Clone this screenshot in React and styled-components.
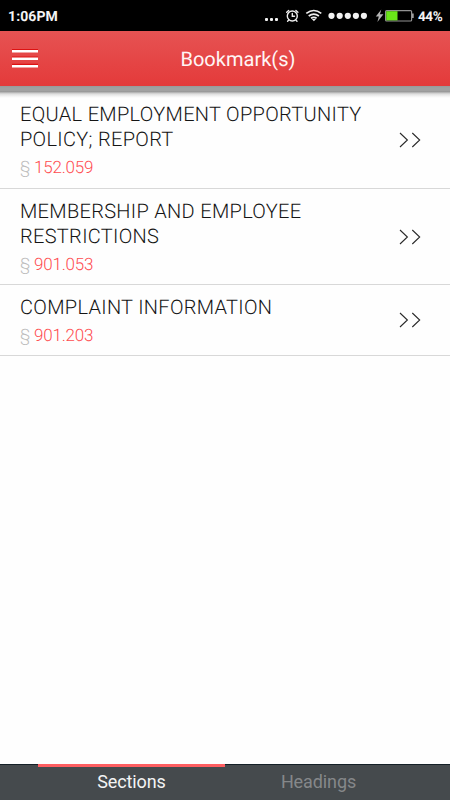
import React from "react";
import styled, { createGlobalStyle } from "styled-components";

const GlobalStyle = createGlobalStyle`
  * { box-sizing: border-box; }
  body { margin: 0; background: #fff; font-family: Roboto, "Liberation Sans", sans-serif; text-rendering: geometricPrecision; }
`;

const Screen = styled.div`
  display: flex;
  flex-direction: column;
  width: 450px;
  height: 800px;
  overflow: hidden;
  background: #fefefe;
`;

const StatusBar = styled.div`
  display: flex;
  justify-content: space-between;
  flex: none;
  height: 31px;
  padding-left: 8px;
  background: #000;
`;

const Clock = styled.span`
  color: #f4f4f4;
  font-size: 14px;
  font-weight: 700;
  line-height: 34px;
  letter-spacing: 0.1px;
`;

const StatusRight = styled.div`
  display: flex;
  padding-right: 7px;
`;

const Percent = styled.span`
  width: 25px;
  color: #f4f4f4;
  font-size: 13.5px;
  font-weight: 700;
  line-height: 34px;
  letter-spacing: -0.4px;
  white-space: nowrap;
`;

const Header = styled.header`
  display: grid;
  grid-template-columns: 26px 1fr;
  align-items: center;
  flex: none;
  height: 55px;
  padding: 0 12px;
  background: linear-gradient(#e65353, #e43a3a);
`;

const MenuButton = styled.button`
  display: flex;
  width: 26px;
  padding: 0 0 1px;
  border: 0;
  background: none;
`;

const Title = styled.h1`
  margin: 0;
  color: #fff5f5;
  font-size: 20px;
  font-weight: 400;
  letter-spacing: 0.03px;
  line-height: 24px;
  text-align: center;
`;

const HeaderShadow = styled.div`
  flex: none;
  height: 12px;
  margin-bottom: -6px;
  background: linear-gradient(
    #999 0, #a1a1a1 2px, #a1a1a1 5px, #8d8d8d 5px, #a6a6a6 6px,
    #c5c5c5 7px, #dedede 8px, #f1f1f1 10px, #fefefe 12px
  );
`;

const List = styled.main`
  flex: 1;
`;

const Row = styled.div`
  display: flex;
  align-items: center;
  justify-content: space-between;
  height: ${(p) => p.$height}px;
  padding: 0 28px 0 20px;
  border-bottom: 1px solid #d8d8d8;
`;

const RowText = styled.div`
  display: flex;
  flex-direction: column;
`;

const RowTitle = styled.div`
  color: #151515;
  font-size: 20px;
  font-weight: 300;
  line-height: 25px;
  letter-spacing: 0.31px;
  white-space: nowrap;
`;

const RowNumber = styled.div`
  margin-top: 6px;
  color: #ff4c50;
  font-size: 17px;
  font-weight: 300;
  line-height: 20px;
  letter-spacing: -0.22px;
  white-space: nowrap;
`;

const SectionMark = styled.span`
  color: #bcbcbc;
`;

const TabBar = styled.nav`
  display: grid;
  grid-template-columns: 187px 187px;
  justify-content: center;
  flex: none;
  height: 36px;
  background: linear-gradient(#152027 1px, #454a4d 1px);
`;

const Tab = styled.button`
  padding: 0 0 4px;
  border: 0;
  border-top: 3px solid ${(p) => (p.$active ? "#fe5e61" : "transparent")};
  background: none;
  color: ${(p) => (p.$active ? "#f3f4f4" : "#85888a")};
  font-family: inherit;
  font-size: 18px;
  line-height: 29px;
  letter-spacing: -0.1px;
`;

const rows = [
  { lines: ["EQUAL EMPLOYMENT OPPORTUNITY", "POLICY; REPORT"], number: "152.059", height: 97 },
  { lines: ["MEMBERSHIP AND EMPLOYEE", "RESTRICTIONS"], number: "901.053", height: 96 },
  { lines: ["COMPLAINT INFORMATION"], number: "901.203", height: 71 },
];

const StatusIcons = () => (
  <svg width="164" height="31" viewBox="254 0 164 31" fill="none">
    <g fill="#f2f2f2">
      <rect x="265" y="18" width="3" height="3" rx="1" />
      <rect x="270" y="18" width="3" height="3" rx="1" />
      <rect x="275" y="18" width="3" height="3" rx="1" />
      {[331.5, 339.7, 347.8, 355.9, 363.9].map((x) => (
        <circle key={x} cx={x} cy="15.8" r="3.1" />
      ))}
    </g>
    <g stroke="#eee" strokeWidth="1.4" strokeLinecap="round">
      <circle cx="292.3" cy="16" r="5" />
      <path d="M292.3 13.5v2.8h2.2M286.7 12.3l2-1.9M297.9 12.3l-2-1.9M288.6 20.3l-1 1M296 20.3l1 1" />
    </g>
    <g stroke="#eee" strokeWidth="1.7">
      <path d="M306.3 13.4q7.5-5.8 15 0M308.7 16q5.1-3.8 10.2 0M311 18.3q2.8-2 5.6 0" />
      <path d="M311.8 19h4.2l-2.1 2.3z" fill="#eee" stroke="none" />
    </g>
    <path d="M381.3 9.5l-5.5 7h3l-1.4 5.5 6-7.8h-3.5z" fill="#b4b4b4" />
    <rect x="385.6" y="10.6" width="26" height="10.4" rx="1" stroke="#929292" strokeWidth="1.2" />
    <rect x="386.2" y="11.2" width="11.3" height="9.2" fill="#6ae519" />
    <rect x="412" y="13.5" width="1.7" height="4.5" fill="#a0a0a0" />
  </svg>
);

const MenuIcon = () => (
  <svg width="26" height="20" viewBox="0 0 26 20">
    <path d="M0 1h26v3H0zM0 8.4h26v3H0zM0 15.8h26v3H0z" fill="#dd1212" />
    <path d="M0 2h26v2.6H0zM0 9.4h26v2.6H0zM0 17h26v2.6H0z" fill="#fff" />
  </svg>
);

const Chevrons = () => (
  <svg width="24" height="16" viewBox="0 0 24 16" fill="none" stroke="#292929" strokeWidth="1.1">
    <path d="M2 1L9.4 8L2 15M14.3 1L21.7 8L14.3 15" />
  </svg>
);

export default function App() {
  return (
    <Screen>
      <GlobalStyle />
      <StatusBar>
        <Clock>1:06PM</Clock>
        <StatusRight>
          <StatusIcons />
          <Percent>44%</Percent>
        </StatusRight>
      </StatusBar>
      <Header>
        <MenuButton aria-label="Menu">
          <MenuIcon />
        </MenuButton>
        <Title>Bookmark(s)</Title>
      </Header>
      <HeaderShadow />
      <List>
        {rows.map((row) => (
          <Row key={row.number} $height={row.height}>
            <RowText>
              {row.lines.map((text) => (
                <RowTitle key={text}>{text}</RowTitle>
              ))}
              <RowNumber>
                <SectionMark>§</SectionMark> {row.number}
              </RowNumber>
            </RowText>
            <Chevrons />
          </Row>
        ))}
      </List>
      <TabBar>
        <Tab $active>Sections</Tab>
        <Tab>Headings</Tab>
      </TabBar>
    </Screen>
  );
}
